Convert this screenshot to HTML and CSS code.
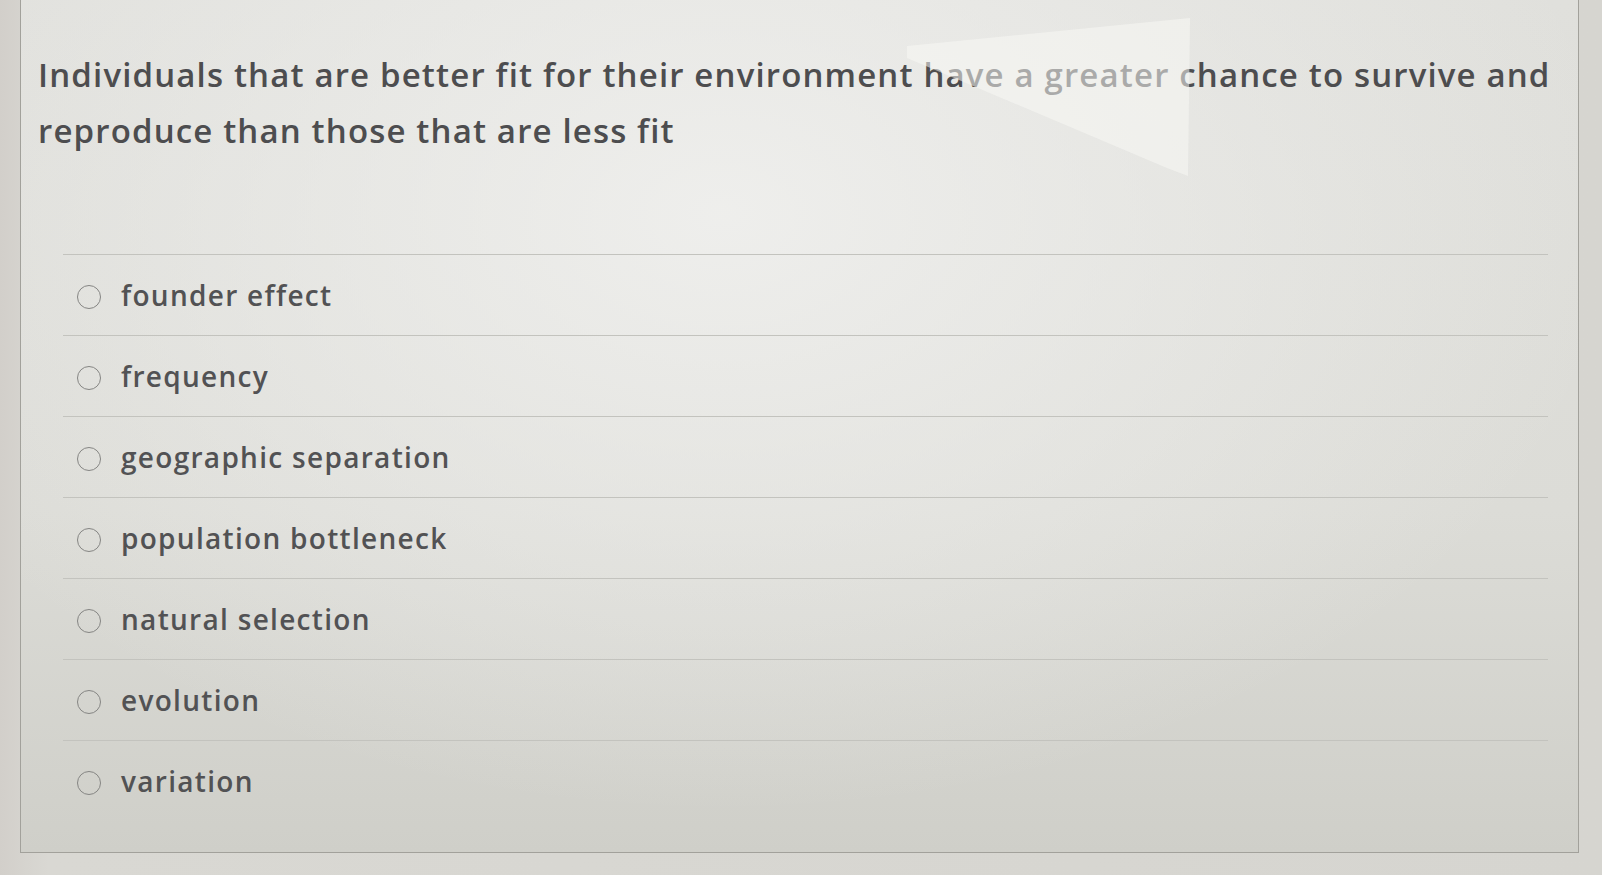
FILE: index.html
```html
<!DOCTYPE html>
<html lang="en">
<head>
	<meta charset="UTF-8">
	<title>Question</title>
	<link rel="stylesheet" href="styles.css">
</head>
<body>
	<div class="card">
		<p class="question">Individuals that are better fit for their environment have a greater chance to survive and reproduce than those that are less fit</p>
		<ul class="options">
			<li><span class="radio"></span>founder effect</li>
			<li><span class="radio"></span>frequency</li>
			<li><span class="radio"></span>geographic separation</li>
			<li><span class="radio"></span>population bottleneck</li>
			<li><span class="radio"></span>natural selection</li>
			<li><span class="radio"></span>evolution</li>
			<li><span class="radio"></span>variation</li>
		</ul>
	</div>
	<div class="glare"></div>
</body>
</html>
```

FILE: styles.css
```css
*{
	margin:0px;
	padding:0px;
}
html,body{
	width:1602px;
	height:875px;
	overflow:hidden;
}
body{
	position:relative;
	font-family:"Open Sans","Noto Sans",sans-serif;
	background:linear-gradient(to right,#d2cfca 0%,#d9d8d3 3%,#d6d5d0 100%);
}
.card{
	margin-left:20px;
	width:1557px;
	height:852px;
	border:1px solid #a2a19b;
	border-top:none;
	background:
		radial-gradient(ellipse 900px 600px at 45% 25%,rgba(240,240,238,0.9),rgba(240,240,238,0) 100%),
		linear-gradient(to bottom,#e0e0dc 0%,#dcdcd7 60%,#cfcfc9 100%);
}
.question{
	padding:47px 20px 0px 17px;
	font-size:33px;
	line-height:56px;
	font-weight:600;
	color:#4d4d4f;
	letter-spacing:1.15px;
}
.options{
	list-style:none;
	margin:95px 30px 0px 42px;
}
.options li{
	display:flex;
	align-items:center;
	height:80px;
	border-top:1px solid #c3c3be;
	font-size:28px;
	font-weight:600;
	color:#525254;
	letter-spacing:1.3px;
}
.radio{
	width:22px;
	height:22px;
	border:1.5px solid #858583;
	border-radius:50%;
	margin:4px 20px 0px 14px;
	flex:none;
}
/* reflection over the title */
.glare{
	position:absolute;
	left:907px;
	top:18px;
	width:284px;
	height:160px;
	background:rgba(248,248,244,0.55);
	clip-path:polygon(0px 28px,283px 0px,281px 158px,260px 150px,0px 40px);
}
```
